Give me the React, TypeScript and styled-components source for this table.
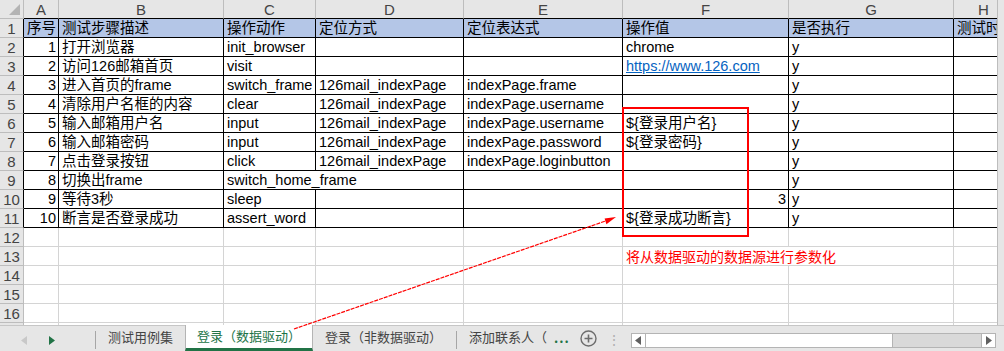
import { Fragment } from 'react';
import styled, { createGlobalStyle } from 'styled-components';

const GlobalStyle = createGlobalStyle`
  html, body {
    margin: 0;
    padding: 0;
    background: #fff;
  }
  body {
    font-family: "Liberation Sans", "Noto Sans CJK SC", sans-serif;
  }
`;

type CellValue = {
  text?: string;
  align?: 'left' | 'right';
  link?: boolean;
  span?: number;
};

const columns = ['A', 'B', 'C', 'D', 'E', 'F', 'G', 'H'];
// row header + A..H
const widths = [24, 35, 165, 92, 148, 159, 166, 165, 60];

const header = ['序号', '测试步骤描述', '操作动作', '定位方式', '定位表达式', '操作值', '是否执行', '测试时间'];

const steps: CellValue[][] = [
  [{ text: '1', align: 'right' }, { text: '打开浏览器' }, { text: 'init_browser' }, {}, {}, { text: 'chrome' }, { text: 'y' }, {}],
  [{ text: '2', align: 'right' }, { text: '访问126邮箱首页' }, { text: 'visit' }, {}, {}, { text: 'https://www.126.com', link: true }, { text: 'y' }, {}],
  [{ text: '3', align: 'right' }, { text: '进入首页的frame' }, { text: 'switch_frame' }, { text: '126mail_indexPage' }, { text: 'indexPage.frame' }, {}, { text: 'y' }, {}],
  [{ text: '4', align: 'right' }, { text: '清除用户名框的内容' }, { text: 'clear' }, { text: '126mail_indexPage' }, { text: 'indexPage.username' }, {}, { text: 'y' }, {}],
  [{ text: '5', align: 'right' }, { text: '输入邮箱用户名' }, { text: 'input' }, { text: '126mail_indexPage' }, { text: 'indexPage.username' }, { text: '${登录用户名}' }, { text: 'y' }, {}],
  [{ text: '6', align: 'right' }, { text: '输入邮箱密码' }, { text: 'input' }, { text: '126mail_indexPage' }, { text: 'indexPage.password' }, { text: '${登录密码}' }, { text: 'y' }, {}],
  [{ text: '7', align: 'right' }, { text: '点击登录按钮' }, { text: 'click' }, { text: '126mail_indexPage' }, { text: 'indexPage.loginbutton' }, {}, { text: 'y' }, {}],
  [{ text: '8', align: 'right' }, { text: '切换出frame' }, { text: 'switch_home_frame', span: 2 }, {}, {}, { text: 'y' }, {}],
  [{ text: '9', align: 'right' }, { text: '等待3秒' }, { text: 'sleep' }, {}, {}, { text: '3', align: 'right' }, { text: 'y' }, {}],
  [{ text: '10', align: 'right' }, { text: '断言是否登录成功' }, { text: 'assert_word' }, {}, {}, { text: '${登录成功断言}' }, { text: 'y' }, {}],
];

const sheets = ['测试用例集', '登录（数据驱动）', '登录（非数据驱动）', '添加联系人（'];

const Page = styled.div`
  position: relative;
  width: 1004px;
  height: 351px;
  display: flex;
  flex-direction: column;
  overflow: hidden;
  background: #fff;
`;

const SheetArea = styled.div`
  display: flex;
  height: 325px;
  border-bottom: 1px solid #c6c6c6;
`;

const GridViewport = styled.div`
  position: relative;
  width: 997px;
  overflow: hidden;
`;

const Grid = styled.div`
  display: grid;
  grid-template-columns: ${widths.map((w) => `${w}px`).join(' ')};
  grid-auto-rows: 19px;
  width: max-content;
  background: #fff;
`;

const Cell = styled.div<{ $strong?: boolean; $align?: string; $span?: number; $blue?: boolean; $front?: boolean }>`
  box-sizing: border-box;
  position: relative;
  z-index: ${(p) => (p.$front ? 1 : 0)};
  grid-column: span ${(p) => p.$span || 1};
  border-right: 1px solid ${(p) => (p.$strong ? '#000' : '#d4d4d4')};
  border-bottom: 1px solid ${(p) => (p.$strong ? '#000' : '#d4d4d4')};
  background: ${(p) => (p.$blue ? '#b4c6e7' : 'transparent')};
  padding: 0 2px 0 3px;
  font-size: 14.5px;
  line-height: 19px;
  color: #000;
  text-align: ${(p) => p.$align || 'left'};
  white-space: nowrap;
  overflow: visible;
`;

const ColHead = styled.div`
  box-sizing: border-box;
  background: #e6e6e6;
  border-right: 1px solid #bdbdbd;
  border-bottom: 1px solid #000;
  color: #444;
  font-size: 15px;
  line-height: 19px;
  text-align: center;
`;

const Corner = styled.div`
  box-sizing: border-box;
  background: #e6e6e6;
  border-right: 1px solid #bdbdbd;
  border-bottom: 1px solid #bdbdbd;
  display: flex;
  align-items: flex-end;
  justify-content: flex-end;
  padding: 0 3px 3px 0;
`;

const RowHead = styled.div<{ $strong?: boolean }>`
  box-sizing: border-box;
  background: #e6e6e6;
  border-right: 1px solid ${(p) => (p.$strong ? '#000' : '#bdbdbd')};
  border-bottom: 1px solid #bdbdbd;
  color: #444;
  font-size: 15px;
  line-height: 19px;
  text-align: center;
`;

const LinkText = styled.span`
  color: #0563c1;
  text-decoration: underline;
`;

const Note = styled.span`
  display: inline-block;
  background: #fff;
  height: 18px;
  padding-right: 4px;
  color: #ff0000;
  font-size: 14px;
  font-family: "Noto Sans CJK SC", sans-serif;
`;

const VScroll = styled.div`
  flex: 1;
  background: #e6e6e6;
  border-left: 1px solid #bdbdbd;
`;

const TabBar = styled.div`
  display: flex;
  align-items: stretch;
  height: 25px;
  background: #e6e6e6;
  font-family: "Noto Sans CJK SC", sans-serif;
  font-size: 13px;
  color: #444;
`;

const NavArrows = styled.div`
  width: 96px;
  display: flex;
  align-items: center;
  justify-content: flex-start;
  gap: 22px;
  padding-left: 21px;
  box-sizing: border-box;
  border-right: 1px solid #a6a6a6;
  margin: 5px 0 2px;
`;

const Tab = styled.div<{ $active?: boolean; $tight?: boolean }>`
  display: flex;
  align-items: center;
  padding: ${(p) => (p.$tight ? '0 0 2px 0' : '0 11px 2px')};
  background: ${(p) => (p.$active ? '#fff' : 'transparent')};
  color: ${(p) => (p.$active ? '#217346' : '#444')};
  border-left: 1px solid ${(p) => (p.$active ? '#b4b4b4' : 'transparent')};
  border-right: 1px solid ${(p) => (p.$active ? '#b4b4b4' : 'transparent')};
  border-bottom: 3px solid ${(p) => (p.$active ? '#217346' : 'transparent')};
  margin-top: ${(p) => (p.$active ? '-1px' : '0')};
  white-space: nowrap;
`;

const Divider = styled.div`
  width: 1px;
  background: #a6a6a6;
  margin: 5px 11px 2px 2px;
`;

const More = styled.div`
  display: flex;
  align-items: center;
  color: #217346;
  font-weight: bold;
  font-size: 13px;
  letter-spacing: 1px;
  padding: 0 10px 2px 6px;
`;

const AddButton = styled.div`
  display: flex;
  align-items: center;
  padding-right: 10px;
`;

const Grip = styled.div`
  display: flex;
  align-items: center;
  color: #b0b0b0;
  font-size: 14px;
  padding-right: 10px;
`;

const HScroll = styled.div`
  flex: 1;
  display: flex;
  margin: 7px 8px 3px 0;
  border: 1px solid #b4b4b4;
  background: #d9d9d9;
`;

const ScrollBtn = styled.div`
  width: 13px;
  background: #fff;
  display: flex;
  align-items: center;
  justify-content: center;
  border-right: 1px solid #b4b4b4;
  &:last-child {
    border-right: none;
    border-left: 1px solid #b4b4b4;
  }
`;

const Thumb = styled.div`
  width: 246px;
  background: #fff;
  border-right: 1px solid #b4b4b4;
`;

const Track = styled.div`
  flex: 1;
`;

const Overlay = styled.svg`
  position: absolute;
  left: 0;
  top: 0;
  pointer-events: none;
`;

const Triangle = ({ dir, color }: { dir: 'left' | 'right'; color: string }) => (
  <svg width="6" height="9" viewBox="0 0 6 9">
    <polygon points={dir === 'left' ? '6,0 6,9 0,4.5' : '0,0 0,9 6,4.5'} fill={color} />
  </svg>
);

export default function App() {
  return (
    <Page>
      <GlobalStyle />
      <SheetArea>
        <GridViewport>
          <Grid>
            <Corner>
              <svg width="11" height="11" viewBox="0 0 11 11">
                <polygon points="11,0 11,11 0,11" fill="#b4b4b4" />
              </svg>
            </Corner>
            {columns.map((c) => (
              <ColHead key={c}>{c}</ColHead>
            ))}

            <RowHead $strong>1</RowHead>
            {header.map((h) => (
              <Cell key={h} $strong $blue>
                {h}
              </Cell>
            ))}

            {steps.map((row, r) => (
              <Fragment key={r}>
                <RowHead $strong>{r + 2}</RowHead>
                {row.map((cell, c) => (
                  <Cell key={c} $strong $align={cell.align} $span={cell.span}>
                    {cell.link ? <LinkText>{cell.text}</LinkText> : cell.text}
                  </Cell>
                ))}
              </Fragment>
            ))}

            {[12, 13, 14, 15, 16, 17].map((n) => (
              <Fragment key={n}>
                <RowHead>{n}</RowHead>
                {columns.map((c) => {
                  const note = n === 13 && c === 'F';
                  return (
                    <Cell key={c} $front={note}>
                      {note ? <Note>将从数据驱动的数据源进行参数化</Note> : null}
                    </Cell>
                  );
                })}
              </Fragment>
            ))}
          </Grid>
        </GridViewport>
        <VScroll />
      </SheetArea>

      <TabBar>
        <NavArrows>
          <Triangle dir="left" color="#c8c8c8" />
          <Triangle dir="right" color="#217346" />
        </NavArrows>
        <Tab>{sheets[0]}</Tab>
        <Tab $active>{sheets[1]}</Tab>
        <Tab>{sheets[2]}</Tab>
        <Divider />
        <Tab $tight>{sheets[3]}</Tab>
        <More>...</More>
        <AddButton>
          <svg width="17" height="17" viewBox="0 0 17 17">
            <circle cx="8.5" cy="8.5" r="7.5" fill="none" stroke="#6d6d6d" strokeWidth="1.4" />
            <path d="M8.5 4.5v8M4.5 8.5h8" stroke="#6d6d6d" strokeWidth="1.6" />
          </svg>
        </AddButton>
        <Grip>⋮</Grip>
        <HScroll>
          <ScrollBtn>
            <Triangle dir="left" color="#606060" />
          </ScrollBtn>
          <Thumb />
          <Track />
          <ScrollBtn>
            <Triangle dir="right" color="#606060" />
          </ScrollBtn>
        </HScroll>
      </TabBar>

      <Overlay width="1004" height="351" viewBox="0 0 1004 351">
        <rect x="623" y="108" width="125" height="128" fill="none" stroke="#ff0000" strokeWidth="2" />
        <line x1="294" y1="329" x2="607" y2="220.5" stroke="#ff0000" strokeWidth="1.2" strokeDasharray="4 1" />
        <polygon points="616,217 606.4,224.2 604.6,218.4" fill="#ff0000" />
      </Overlay>
    </Page>
  );
}
